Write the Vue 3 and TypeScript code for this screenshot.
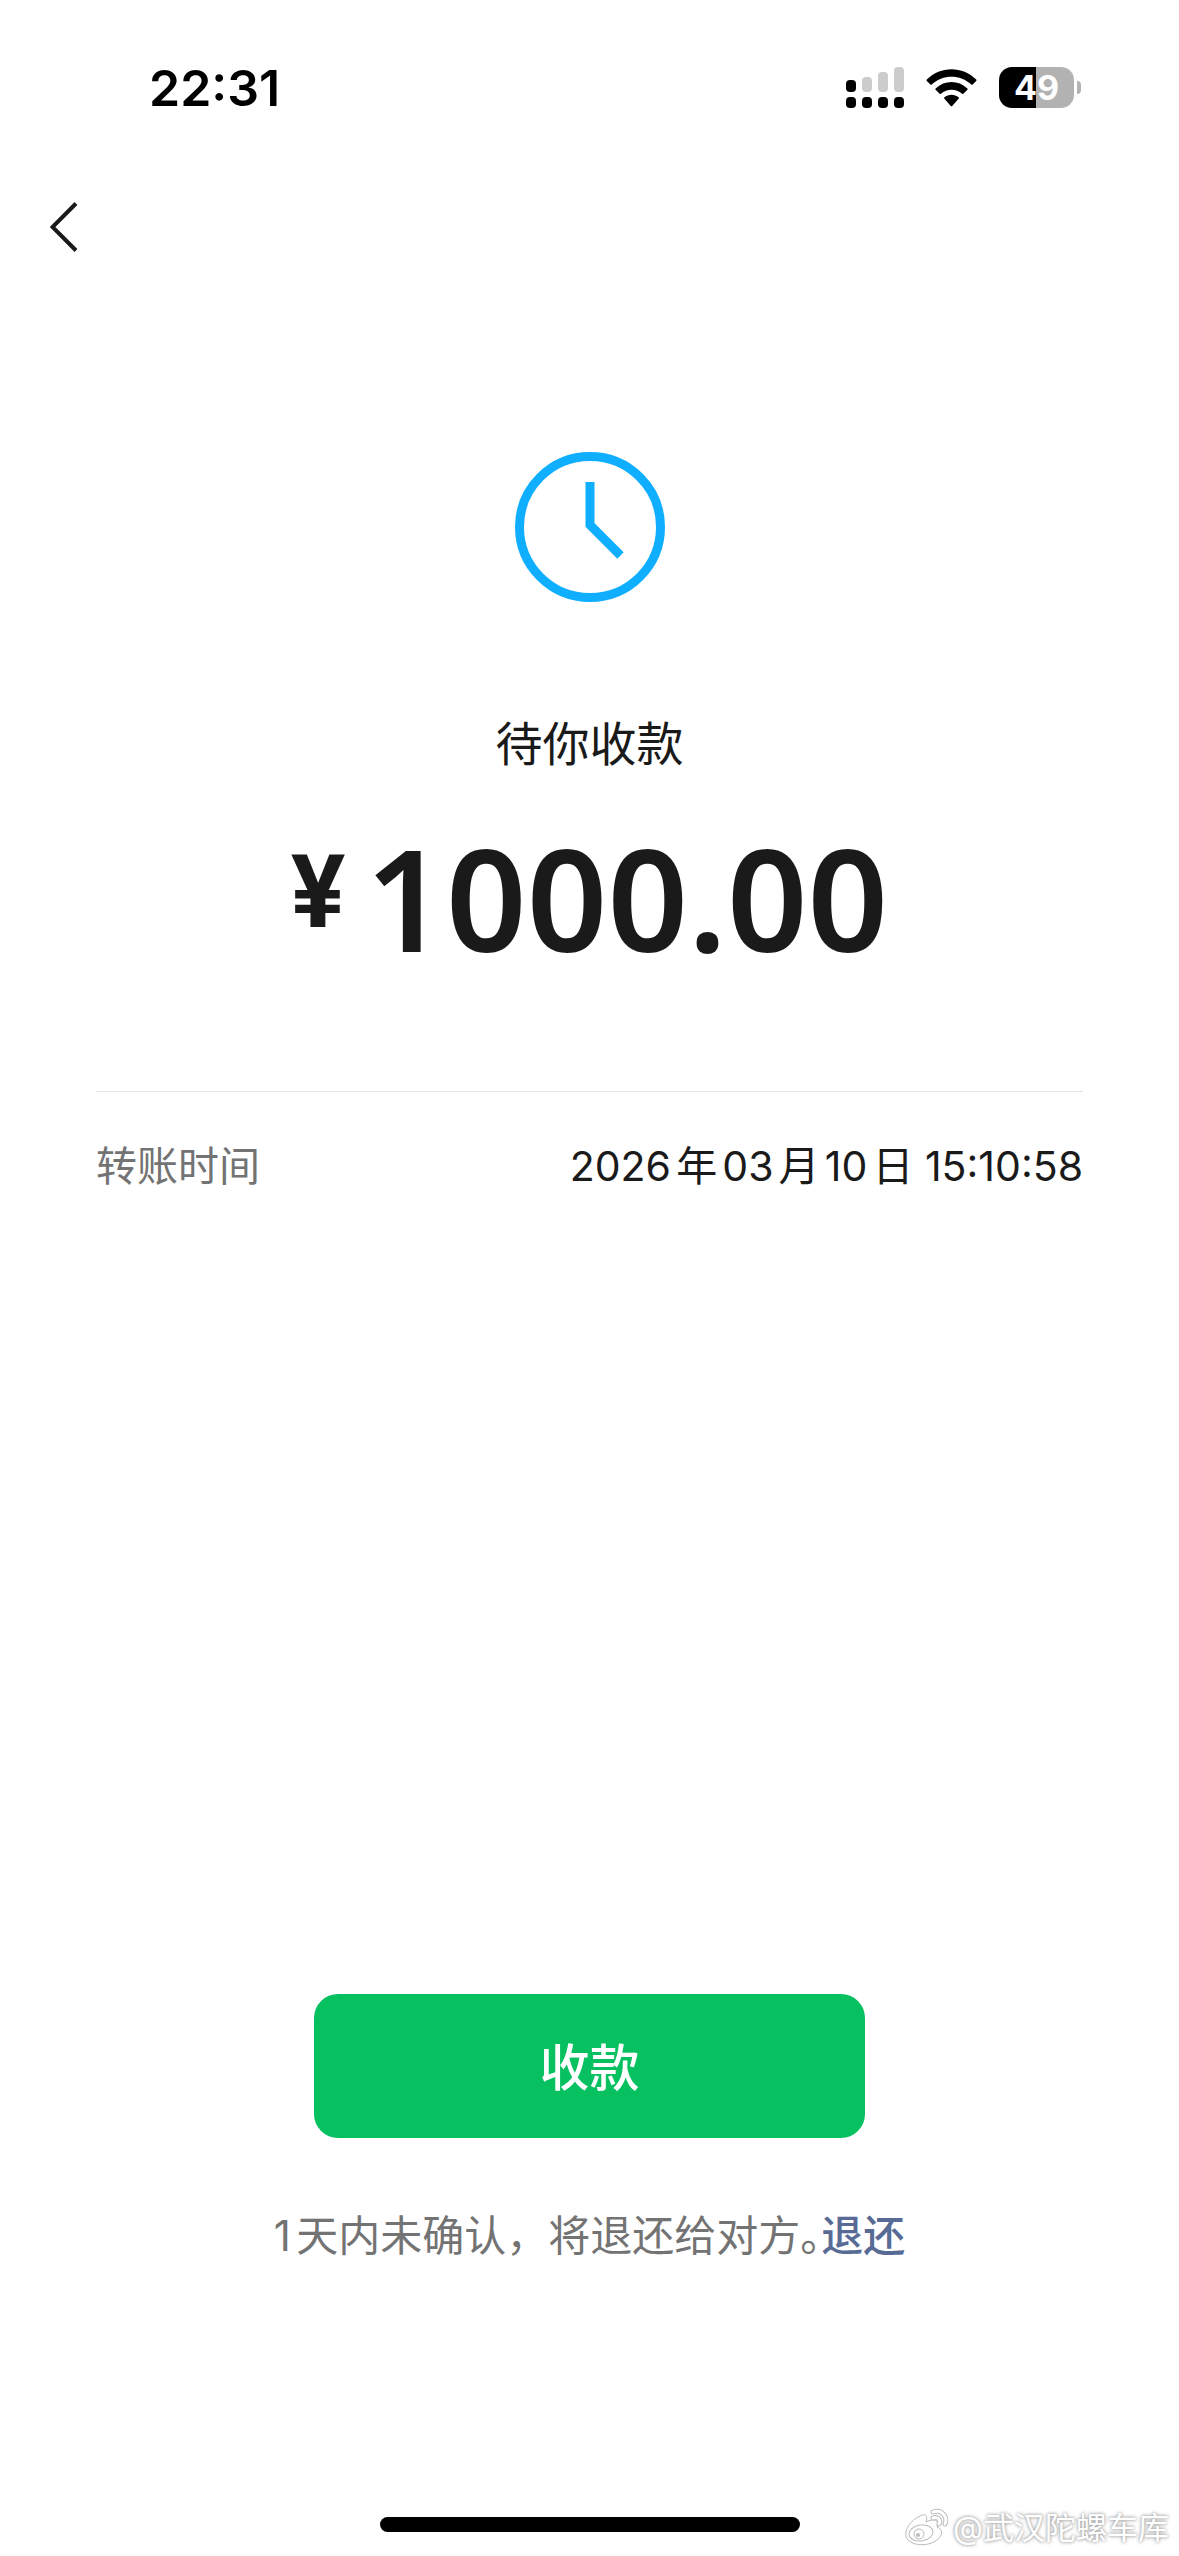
<script setup lang="ts">
interface SignalBar {
  x: number
  top: number
  active: boolean
}

const time = '22:31'
const battery = 49
const amount = '1000.00'
const transferTime = '2026年03月10日 15:10:58'

const signalBars: SignalBar[] = [
  { x: 0, top: 13, active: true },
  { x: 16, top: 10, active: false },
  { x: 32, top: 5, active: false },
  { x: 48, top: 0, active: false },
]
</script>

<template>
  <div class="page">
    <header class="status-bar">
      <span class="time">{{ time }}</span>
      <div class="indicators">
        <svg class="signal" viewBox="0 0 58 41" aria-hidden="true">
          <g v-for="bar in signalBars" :key="bar.x">
            <rect :x="bar.x" :y="bar.top" width="10" :height="25 - bar.top" rx="4" :fill="bar.active ? '#000' : '#ccc'" />
            <rect :x="bar.x" y="30" width="10" height="11" rx="4" fill="#000" />
          </g>
        </svg>
        <svg class="wifi" viewBox="0 0 51 38" aria-hidden="true">
          <path d="M0.8 10.6C14.5-3.2 36.5-3.2 50.2 10.6Q50.8 11.3 50.2 12L46.6 15.6Q46 16.2 45.3 15.6C34.3 5 16.7 5 5.7 15.6Q5 16.2 4.4 15.6L0.8 12Q0.2 11.3 0.8 10.6Z" />
          <path d="M9.6 19.4C18.5 10.8 32.5 10.8 41.4 19.4Q42 20.1 41.4 20.8L37.4 24.7Q36.8 25.2 36.1 24.7C30 19.3 21 19.3 14.9 24.7Q14.2 25.2 13.6 24.7L9.6 20.8Q9 20.1 9.6 19.4Z" />
          <path d="M18.4 28.2C22.4 24.8 28.6 24.8 32.6 28.2Q33.3 29 32.6 29.7L26.2 36.9Q25.5 37.6 24.8 36.9L18.4 29.7Q17.7 29 18.4 28.2Z" />
        </svg>
        <div class="battery">
          <span class="battery-body" :style="{ '--level': battery + '%' }">{{ battery }}</span>
          <span class="battery-cap"></span>
        </div>
      </div>
    </header>

    <nav class="nav-bar">
      <button class="back" type="button" aria-label="返回">
        <svg viewBox="0 0 28 50" aria-hidden="true">
          <path d="M26 1.500L2.500 25L26 48.500" fill="none" stroke="#1a1a1a" stroke-width="4" />
        </svg>
      </button>
    </nav>

    <main class="content">
      <svg class="clock" viewBox="0 0 150 150" aria-hidden="true">
        <circle cx="75" cy="75" r="70.500" />
        <path d="M75 30V73L105.500 103.500" />
      </svg>
      <h1 class="title">待你收款</h1>
      <p class="amount"><span class="currency">¥</span><span>{{ amount }}</span></p>
      <dl class="details">
        <dt>转账时间</dt>
        <dd>{{ transferTime }}</dd>
      </dl>
    </main>

    <footer class="actions">
      <button class="accept" type="button">收款</button>
      <p class="hint">1天内未确认，将退还给对方<span class="stop">。</span><a href="#">退还</a></p>
      <div class="home-indicator"></div>
    </footer>

    <div class="watermark">
      <svg viewBox="0 0 46 38" aria-hidden="true">
        <path class="mark" d="M16 7C22 4 24 7 22 13C30 9 36 11 33 18C39 20 39 26 34 30C27 37 11 38 4 31C-2 24 5 12 16 7Z" />
        <ellipse class="mark" cx="17" cy="24" rx="12" ry="8" transform="rotate(-8 17 24)" />
        <circle class="mark" cx="15" cy="25" r="5" />
        <circle cx="14" cy="26" r="2" fill="#bbb" />
        <path class="arc-edge" d="M29 3C38 0 44 8 41 15M29 9C34 7 37 11 35 15" />
        <path class="arc" d="M29 3C38 0 44 8 41 15M29 9C34 7 37 11 35 15" />
      </svg>
      <span>@武汉陀螺车库</span>
    </div>
  </div>
</template>

<style>
body {
  margin: 0;
  background: #fff;
}
</style>

<style scoped>
.page {
  position: relative;
  display: flex;
  flex-direction: column;
  min-height: 100vh;
  background: #fff;
  color: #1a1a1a;
  font-family: Inter, "Noto Sans CJK SC", sans-serif;
  text-autospace: normal;
}

.status-bar {
  display: flex;
  align-items: center;
  justify-content: space-between;
  height: 175px;
  padding: 0 98px 0 149px;
  box-sizing: border-box;
  color: #000;
}

.time {
  font-size: 50px;
  line-height: 60px;
  font-weight: 600;
}

.indicators {
  display: flex;
  align-items: center;
}

.signal {
  width: 58px;
  height: 41px;
  margin-right: 22px;
}

.wifi {
  width: 51px;
  height: 38px;
  margin-right: 22px;
}

.battery {
  display: flex;
  align-items: center;
  gap: 3px;
}

.battery-body {
  width: 75px;
  height: 41px;
  border-radius: 13px;
  background: linear-gradient(to right, #000 var(--level), #b2b2b2 var(--level));
  color: #fff;
  font-size: 34px;
  line-height: 41px;
  font-weight: 700;
  text-align: center;
}

.battery-cap {
  width: 4px;
  height: 13px;
  border-radius: 0 4px 4px 0;
  background: #b2b2b2;
}

.nav-bar {
  display: flex;
  align-items: center;
  height: 103px;
  padding: 0 50px;
}

.back {
  display: flex;
  padding: 0;
  border: 0;
  background: none;
}

.back svg {
  width: 28px;
  height: 50px;
}

.content {
  display: flex;
  flex-direction: column;
  align-items: center;
  padding: 174px 96px 0;
}

.clock {
  width: 150px;
  height: 150px;
  fill: none;
  stroke: #10aeff;
  stroke-width: 9px;
}

.title {
  margin: 112px 0 0;
  font-size: 47px;
  line-height: 60px;
  font-weight: 400;
}

.amount {
  display: flex;
  align-items: flex-start;
  gap: 20px;
  margin: 51px 0 0;
  font-family: "Noto Sans", sans-serif;
  font-size: 141px;
  line-height: 144px;
  font-weight: 600;
}

.currency {
  font-family: Roboto, sans-serif;
  font-size: 102px;
  line-height: 134px;
  font-weight: 700;
}

.details {
  display: flex;
  justify-content: space-between;
  align-self: stretch;
  margin: 122px 0 0;
  padding-top: 44px;
  border-top: 1px solid #e5e5e5;
  font-size: 41px;
  line-height: 60px;
}

.details dt {
  color: #737373;
}

.details dd {
  margin: 0;
}

.actions {
  display: flex;
  flex-direction: column;
  align-items: center;
  margin-top: auto;
  padding-bottom: 24px;
}

.accept {
  width: 551px;
  height: 144px;
  padding: 0 0 4px;
  border: 0;
  border-radius: 24px;
  background: #07c160;
  color: #fff;
  font-family: inherit;
  font-size: 50px;
  font-weight: 500;
}

.hint {
  margin: 68px 0 0;
  color: #737373;
  font-size: 42px;
  line-height: 60px;
}

.stop {
  font-feature-settings: "halt";
}

.hint a {
  color: #576b95;
  font-weight: 500;
  text-decoration: none;
}

.home-indicator {
  width: 420px;
  height: 15px;
  margin-top: 251px;
  border-radius: 8px;
  background: #000;
}

.watermark {
  position: absolute;
  right: 10px;
  bottom: 8px;
  display: flex;
  align-items: center;
  gap: 3px;
  color: #fff;
  font-size: 31px;
  line-height: 40px;
  text-shadow: 0 0 3px #999, 0 0 4px #bbb;
}

.watermark svg {
  width: 46px;
  height: 38px;
  overflow: visible;
}

.mark {
  fill: #fff;
  stroke: #bbb;
  stroke-width: 1px;
}

.arc,
.arc-edge {
  fill: none;
  stroke: #fff;
  stroke-width: 3px;
  stroke-linecap: round;
}

.arc-edge {
  stroke: #bbb;
  stroke-width: 5px;
}
</style>
